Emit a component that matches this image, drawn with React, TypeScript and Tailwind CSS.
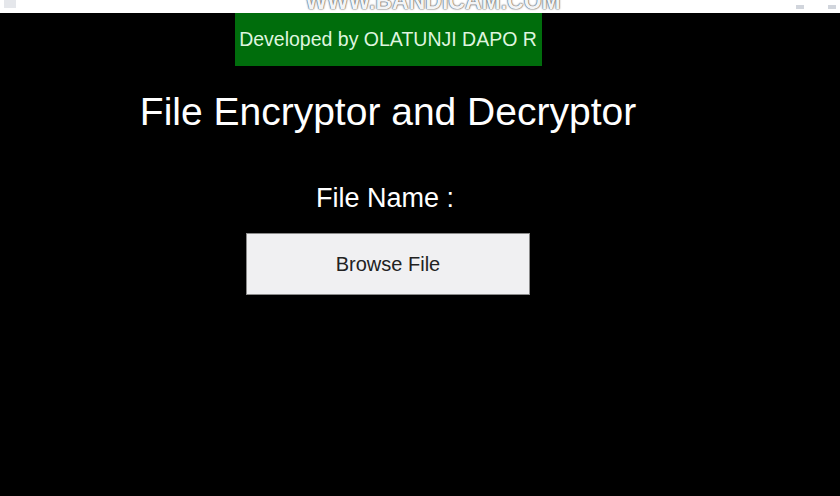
export default function App() {
    return (
        <div className="w-[840px] h-[496px] bg-black overflow-hidden flex flex-col font-['Liberation_Sans',Arial,sans-serif]">
            {/* Recorder watermark strip */}
            <div className="h-[13px] bg-white overflow-hidden flex justify-between items-end px-1 shrink-0">
                <span className="w-3 h-2 bg-gray-200 mb-[5px]" />
                <div className="flex justify-center w-[776px] pl-[54px]">
                    <span className="-mt-[12px] text-[23px] leading-[23px] font-bold text-gray-100 [text-shadow:0_0_2px_#555,0_0_1px_#333]">
                        WWW.BANDICAM.COM
                    </span>
                </div>
                <div className="flex gap-6 mb-[4px]">
                    <span className="w-2 h-1 bg-gray-300" />
                    <span className="w-2 h-1 bg-gray-300" />
                </div>
            </div>

            <div className="w-[776px] flex flex-col items-center">
                <div className="w-[307px] h-[53px] bg-[#006d0c] flex items-center justify-center">
                    <span className="text-[19.5px] text-[#dff5df]">Developed by OLATUNJI DAPO R</span>
                </div>

                <h1 className="mt-[23px] text-[39px] leading-[46px] text-white">File Encryptor and Decryptor</h1>

                <p className="mt-[47px] -ml-[6px] text-[27px] leading-[32px] text-white">File Name :</p>

                <button className="mt-[19px] w-[284px] h-[62px] bg-[#f0f0f2] border border-[#8a8a8a] text-[20px] text-[#222]">
                    Browse File
                </button>
            </div>
        </div>
    )
}
